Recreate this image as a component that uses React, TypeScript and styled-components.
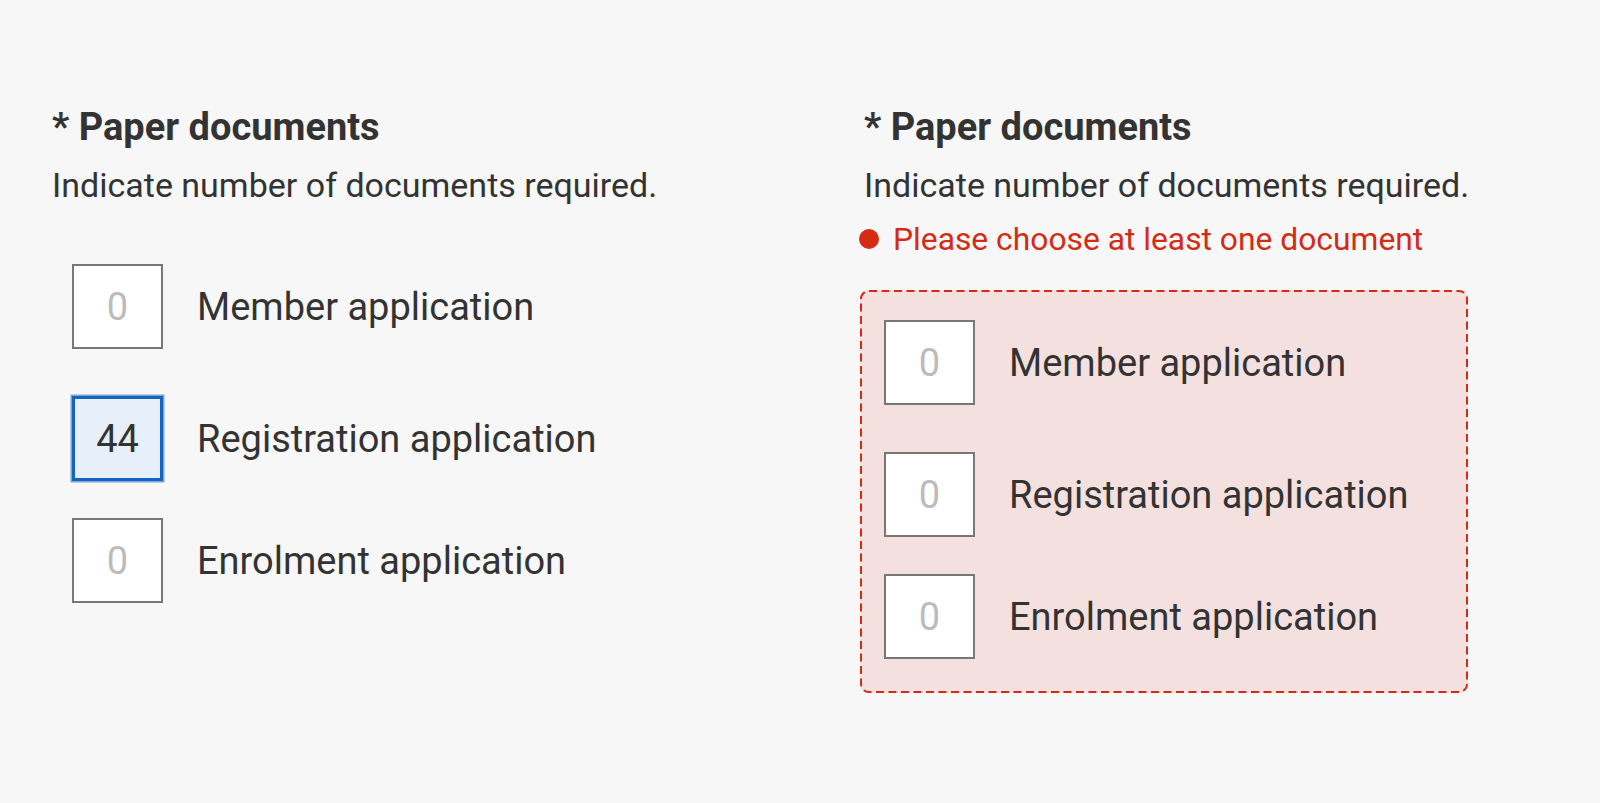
import React from "react";
import styled, { createGlobalStyle, css } from "styled-components";

const GlobalStyle = createGlobalStyle`
  html, body {
    margin: 0;
    padding: 0;
    background: #f7f7f7;
  }
  body {
    font-family: Roboto, "Liberation Sans", Arial, sans-serif;
    color: #333333;
  }
`;

const RED = "#d42b14";

const Page = styled.main`
  display: grid;
  grid-template-columns: 812px 606px;
  align-items: start;
  padding: 107px 0 0 50px;
  min-height: 803px;
  box-sizing: border-box;
`;

const Field = styled.fieldset`
  display: flex;
  flex-direction: column;
  align-items: flex-start;
  margin: 0;
  padding: 0;
  border: 0;
  min-width: 0;
`;

const Heading = styled.legend`
  display: block;
  float: left;
  width: 100%;
  margin: 0;
  padding: 0 0 0 2px;
  font-size: 38px;
  line-height: 40px;
  font-weight: 700;
  color: #333333;
  white-space: nowrap;
`;

const Hint = styled.p`
  margin: 18px 0 0 2px;
  font-size: 34px;
  line-height: 40px;
  font-weight: 400;
  color: #333333;
  white-space: nowrap;
`;

const ErrorText = styled.p`
  display: flex;
  align-items: center;
  gap: 14px;
  margin: 16px 0 0 -3px;
  font-size: 31.8px;
  line-height: 36px;
  color: ${RED};
  white-space: nowrap;
`;

const Dot = styled.span`
  width: 20px;
  height: 20px;
  border-radius: 50%;
  background: ${RED};
  flex: none;
`;

const Options = styled.div<{ $invalid?: boolean }>`
  position: relative;
  display: flex;
  flex-direction: column;
  align-self: stretch;
  ${(p) =>
    p.$invalid
      ? css`
          margin: 33px 0 0 -2px;
          padding: 30px 24px 34px;
          border-radius: 8px;
          background: #f4e1df;
        `
      : css`
          margin-top: 59px;
          padding: 0 0 0 22px;
        `}
`;

const DashedFrame = styled.svg`
  position: absolute;
  inset: 0;
  width: 100%;
  height: 100%;
  overflow: visible;
  pointer-events: none;
`;

const Row = styled.label<{ $space: number }>`
  display: flex;
  align-items: center;
  gap: 34px;
  margin-bottom: ${(p) => p.$space}px;
`;

const CountInput = styled.input<{ $focused?: boolean }>`
  width: 91px;
  height: 85px;
  box-sizing: border-box;
  flex: none;
  margin: 0;
  padding: 0;
  border: 2px solid #777777;
  border-radius: 0;
  background: #ffffff;
  font-family: Roboto, "Liberation Sans", Arial, sans-serif;
  font-size: 38px;
  color: #333333;
  text-align: center;
  outline: none;
  &::placeholder {
    color: #bbbbbb;
    opacity: 1;
  }
  ${(p) =>
    p.$focused &&
    css`
      border: 3px solid #1565c0;
      background: #e7f0fa;
      box-shadow: 0 0 0 1.5px rgba(21, 101, 192, 0.55);
    `}
`;

const LabelText = styled.span`
  font-size: 38px;
  line-height: 44px;
  color: #333333;
  white-space: nowrap;
`;

type Item = { label: string; value?: string; focused?: boolean };

const spaces = [47, 37, 0];

function DocumentsField({ items, invalid }: { items: Item[]; invalid?: boolean }) {
  return (
    <Field>
      <Heading>* Paper documents</Heading>
      <Hint>Indicate number of documents required.</Hint>
      {invalid && (
        <ErrorText>
          <Dot />
          Please choose at least one document
        </ErrorText>
      )}
      <Options $invalid={invalid}>
        {invalid && (
          <DashedFrame aria-hidden="true">
            <rect
              x="1"
              y="1"
              width="calc(100% - 2px)"
              height="calc(100% - 2px)"
              rx="8"
              ry="8"
              fill="none"
              stroke={RED}
              strokeWidth="2"
              strokeDasharray="8 4.5"
            />
          </DashedFrame>
        )}
        {items.map((it, i) => (
          <Row key={it.label} $space={spaces[i]}>
            <CountInput
              type="text"
              placeholder="0"
              defaultValue={it.value}
              $focused={it.focused}
              readOnly
            />
            <LabelText>{it.label}</LabelText>
          </Row>
        ))}
      </Options>
    </Field>
  );
}

export default function App() {
  return (
    <>
      <GlobalStyle />
      <Page>
        <DocumentsField
          items={[
            { label: "Member application" },
            { label: "Registration application", value: "44", focused: true },
            { label: "Enrolment application" },
          ]}
        />
        <DocumentsField
          invalid
          items={[
            { label: "Member application" },
            { label: "Registration application" },
            { label: "Enrolment application" },
          ]}
        />
      </Page>
    </>
  );
}
